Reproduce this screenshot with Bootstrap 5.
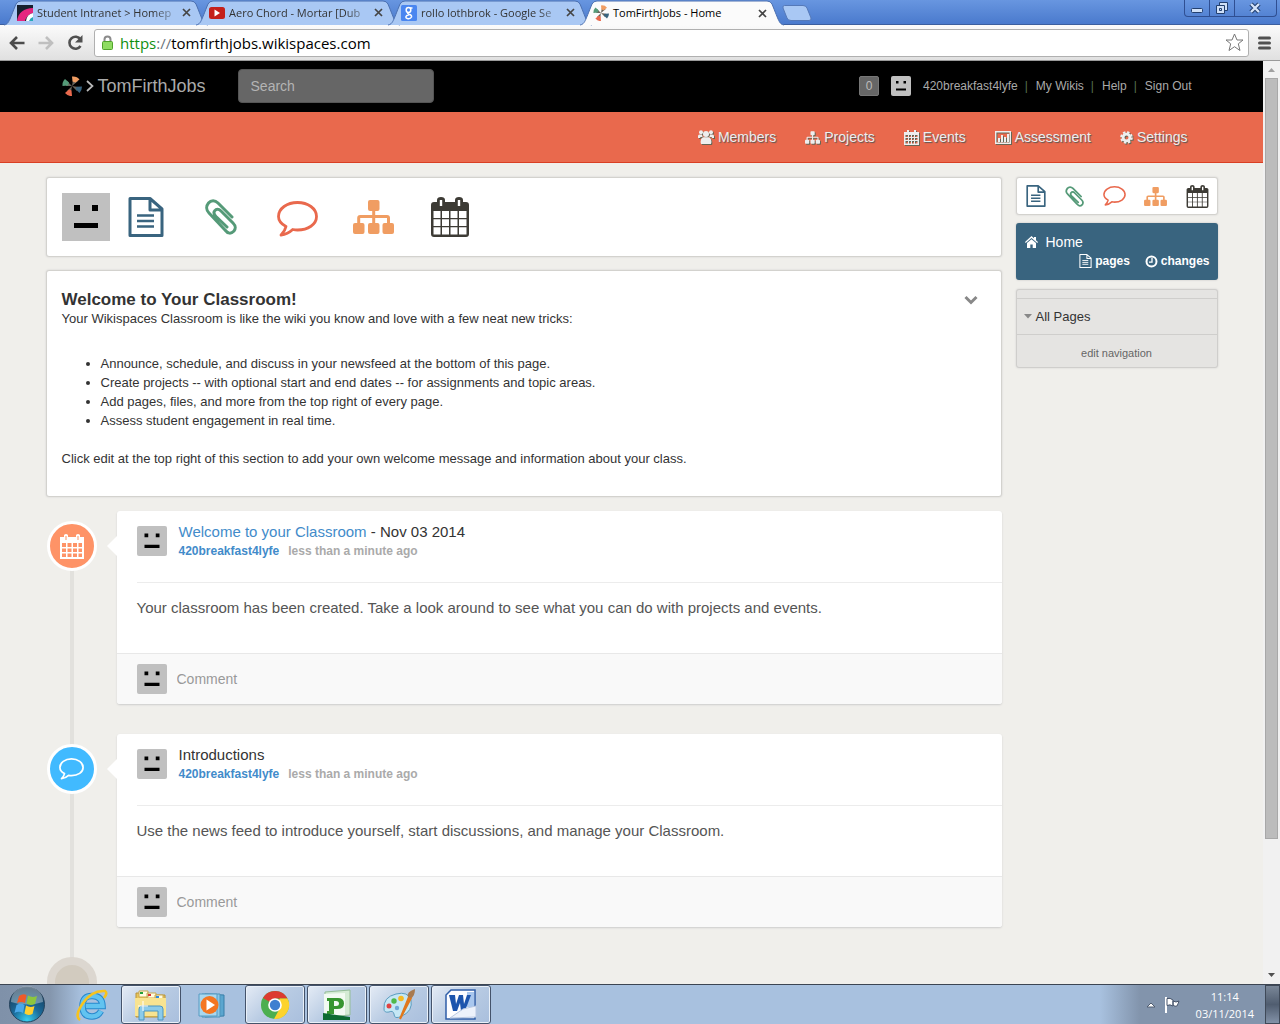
<!DOCTYPE html>
<html lang="en">
<head>
<meta charset="utf-8">
<meta name="viewport" content="width=device-width, initial-scale=1">
<title>TomFirthJobs - Home</title>
<link href="https://cdn.jsdelivr.net/npm/bootstrap@5.3.0/dist/css/bootstrap.min.css" rel="stylesheet">
<style>
body{font-family:"Liberation Sans",Arial,sans-serif;font-size:14px;line-height:20px;color:#333;background:#f0efeb}
a{text-decoration:none}
svg{display:block;flex:none}
button{border:0;background:none;padding:0;color:inherit}
.ui-font{font-family:"Open Sans","Noto Sans",sans-serif}
/* browser window */
.tabstrip{height:25px;background:linear-gradient(#6896e0,#4a7acd);border-bottom:1px solid #3c5f9f;padding-left:4px}
.tab{width:204px;margin-right:-12px;height:25px;padding-left:13px;font-size:11px;line-height:24px;color:#333}
.tab-shape{position:absolute;left:0;top:0;width:100%;height:26px}
.tab-title{width:137px;white-space:nowrap;margin-left:4px}
.faded{-webkit-mask-image:linear-gradient(90deg,#000 85%,#0004);mask-image:linear-gradient(90deg,#000 85%,#0004)}
.tab.active{z-index:3;height:26px;color:#000}
.tab>*{position:relative}
.tab>.tab-shape{position:absolute}
.win-buttons{width:93px;height:17px;border:1px solid #2f4f92;border-top:0;border-radius:0 0 4px 4px;margin-right:3px}
.win-buttons button+button{border-left:1px solid #2f4f92}
.toolbar{height:36px;background:linear-gradient(#fbfbfb,#e0e0e0);border-bottom:1px solid #9a9a9a;padding:0 9px}
.omnibox{height:28px;background:#fff;border:1px solid #b0b0b0;border-radius:3px;margin:0 9px 0 11px;padding:0 4px 0 6px;font-size:15px;line-height:26px;color:#000;gap:6px}
.scheme{color:#0f8f0f}
.scroller{width:17px;background:#f1f1f1;padding:0 2px}
.thumb{flex:0 0 82.5%;background:#bcbcbc;border:1px solid #a8a8a8}
/* site header */
.topbar{height:51px;background:#000;color:#aaa;padding-bottom:1px}
.site-width{width:100%;max-width:1172px;margin:0 auto}
.brand{font-size:18px;color:#aaa;gap:4px;margin-right:32px}
.search{width:196px;height:34px;background:#666;border:1px solid #555;border-radius:4px;color:#ccc;padding:0 12px;font-size:14px}
.search::placeholder{color:#b4b4b4;opacity:1}
.user-links{font-size:12px;padding-right:26px}
.user-links a{color:#aaa}
.count{width:20px;height:20px;background:#666;border:1px solid #777;border-radius:2px;text-align:center;line-height:18px;color:#bbb}
.divider{color:#56704f;margin:0 8px 0 7px}
.mainnav{height:51px;background:#e9694d;border-bottom:1px solid #d93f23}
.mainnav a{color:#eee;text-shadow:1px 1px 1px #555;gap:4px}
.mainnav svg{filter:drop-shadow(1px 1px 0 #665)}
.mainnav .site-width{gap:29px;padding-right:30px}
/* page body */
.layout{gap:14px;padding-top:14px}
.sidebar{width:202px}
.panel{background:#fff;border:1px solid #d3d2ce;border-radius:3px;box-shadow:0 0 2px #ccc}
.create-bar{height:80px;padding:0 15px}
.create-cell{width:76px;padding-right:4px}
.welcome{margin-top:13px;padding:19px 15px 29px;font-size:13px;line-height:19px;height:227px}
.welcome h1{font-size:17px;line-height:19px;font-weight:700;margin:0}
.welcome ul{margin:26px 0 19px;padding-left:39px}
.welcome p{margin:0}
.feed{margin-top:14px;padding-left:1px}
.feed::before{content:"";position:absolute;left:24px;top:35px;bottom:0;width:4px;background:#e2e1dd}
.entry{gap:20px;margin-bottom:30px}
.node{width:50px;height:50px;border:3px solid #fff;border-radius:50%;color:#fff;margin-top:10px;flex:none}
.node.event{background:#fe9367}
.node.talk{background:#41baff}
.node.last{background:#d2cbbf;border:8px solid #dcd7d0;margin:0}
.post{background:#fff;border-radius:3px;box-shadow:0 1px 2px #ccc}
.post::before{content:"";position:absolute;left:-10px;top:25px;border:10px solid transparent;border-left:0;border-right-color:#fff}
.post-head{margin-left:20px;padding-top:11px;height:72px;border-bottom:1px solid #ececec;gap:12px}
.post-title{font-size:15px;line-height:20px}
.post-meta{font-size:12px;line-height:19px;font-weight:700;color:#aaa;gap:9px}
.post a,.post-title a{color:#428bca}
.post-text{height:70px;padding:15px 20px;font-size:15px;color:#555}
.post-foot{height:51px;background:#f9f9f9;border-top:1px solid #e8e8e8;border-radius:0 0 3px 3px;padding:0 20px;gap:10px}
.post-foot input{border:0;background:none;padding:0;font-size:14px;outline:0}
.post-foot input::placeholder{color:#999;opacity:1}
.face{border-radius:2px}
.side-create{height:38px;padding:0 8px}
.home-box{margin-top:8px;height:57px;background:#39647f;border-radius:3px;color:#fff;padding:9px 8px 0 9px;box-shadow:0 0 2px #bbb}
.home-box a{color:#fff}
.home-sub{font-size:12px;font-weight:700;gap:15px;line-height:18px}
.home-sub a{gap:3px}
.side-nav{margin-top:9px;background:#e5e4e2;border:1px solid #cfcecc;border-radius:3px;padding-top:8px;box-shadow:0 0 2px #ccc}
.side-nav>*{border-top:1px solid #cfcecc}
.all-pages{height:36px;padding-left:7px;gap:4px;font-size:13px;color:#333}
.edit-nav{height:33px;padding-top:4px;font-size:11px;color:#666}
.c-blue{color:#39647f}.c-green{color:#559a78}.c-red{color:#e9694d}.c-orange{color:#f09d62}.c-dark{color:#3d3b35}
/* taskbar */
.taskbar{height:40px;border-top:1px solid #3c4552;background:linear-gradient(90deg,#7f91a9 0,#8496ad 50px,#a8c1df 82px,#a8c1df calc(100% - 180px),#8294ac calc(100% - 140px),#8294ac);padding-left:7px;gap:2px}
.task{width:60px;height:39px}
.task-wide{width:54px}
.task.open{background:linear-gradient(135deg,#e4ebf5,#b8cbe3 50%,#a9bfdd);border:1px solid #44536b;border-radius:3px;box-shadow:inset 0 0 0 1px #e9f0f8}
.clock{font-size:11px;line-height:17px;color:#fff;text-align:center;margin:0 11px 0 16px}
.show-desktop{width:15px;height:39px;background:linear-gradient(#7a8798,#505d70 50%,#8392a8);border:1px solid #3f4958}
</style>
<script src="https://cdn.jsdelivr.net/npm/bootstrap@5.3.0/dist/js/bootstrap.bundle.min.js"></script>
</head>
<body class="vh-100 d-flex flex-column overflow-hidden">
<svg width="0" height="0" class="position-absolute" aria-hidden="true">
<symbol id="i-file" viewBox="0 0 36 40"><path d="M2 1.5H22L34 12V38.5H2ZM22 2V13H34" fill="none" stroke="currentColor" stroke-width="3" stroke-linejoin="round"/><path d="M9 18.5H26M9 24H26M9 29.500H26" stroke="currentColor" stroke-width="2.600"/></symbol>
<symbol id="i-clip" viewBox="0 0 33 36"><path d="M27 18L13 4C10 1 6 1 3.500 4C1 7 1 11 4 14L20 31C23 35 26 35 29 32C31 29 31 27 28 24L16 12C13.500 9.500 11 10 10 11.500C8 13.500 9 15.500 11 17.500L22 28" fill="none" stroke="currentColor" stroke-width="3" stroke-linecap="round"/></symbol>
<symbol id="i-talk" viewBox="0 0 41 36"><path d="M20.500 1.500C31 1.500 39.500 7.500 39.500 15.500S31 29 20.500 29C18.800 29 17.200 28.800 15.700 28.500C12.500 31.500 8.500 33.500 4 34C6.500 31.500 8.300 29 9 25.500C4.200 23 1.500 19.500 1.500 15.500C1.500 7.500 10 1.500 20.500 1.500Z" fill="none" stroke="currentColor" stroke-width="2.800" stroke-linejoin="round"/></symbol>
<symbol id="i-tree" viewBox="0 0 41 34"><g fill="currentColor"><rect x="15" width="11.500" height="11" rx="2"/><rect y="23" width="11.500" height="11" rx="2"/><rect x="15" y="23" width="11.500" height="11" rx="2"/><rect x="29.500" y="23" width="11.500" height="11" rx="2"/></g><path d="M20.700 10V24M5.700 24V18Q5.700 16.500 7.200 16.500H34Q35.500 16.500 35.500 18V24" fill="none" stroke="currentColor" stroke-width="3"/></symbol>
<symbol id="i-cal" viewBox="0 0 38 40"><path fill="currentColor" fill-rule="evenodd" d="M3 5H6V3Q6 0 10 0T14 3V5H24V3Q24 0 28 0T32 3V5H35Q38 5 38 8V37Q38 40 35 40H3Q0 40 0 37V8Q0 5 3 5ZM8.800 3V9H11.200V3ZM26.800 3V9H29.200V3ZM2.500 14V21H9.500V14ZM11 14V21H18V14ZM19.500 14V21H26.500V14ZM28 14V21H35.500V14ZM2.500 22.200V29H9.500V22.200ZM11 22.200V29H18V22.200ZM19.500 22.200V29H26.500V22.200ZM28 22.200V29H35.500V22.200ZM2.500 30.200V37.500H9.500V30.200ZM11 30.200V37.500H18V30.200ZM19.500 30.200V37.500H26.500V30.200ZM28 30.200V37.500H35.500V30.200Z"/></symbol>
<symbol id="i-face" viewBox="0 0 24 24"><path fill="#c0c0c0" d="M0 0h24v24H0z"/><path d="M6 6h3v3H6zM15 6h3v3h-3zM6 15h12v2.500H6z"/></symbol>
<symbol id="i-pin" viewBox="0 0 20 20"><path fill="#6a655c" d="M10 10L11 4L16 5ZM10 10L16 11L15 15ZM10 10L9 16L5 15ZM10 10L4 10L5 5Z"/><path fill="#f09d62" d="M10 0.500Q15 0 17.500 3.500L13.500 6.500L10.500 5.500Z"/><path fill="#39647f" d="M20 10.500Q20 14.500 17.500 17L13.500 13L14.500 10.800Z"/><path fill="#e9694d" d="M10 20Q6 20.500 3 17L7 13.500L9.500 14.500Z"/><path fill="#559a78" d="M0.500 10Q0 6 3 3L7 6.500L6 9.500Z"/></symbol>
<symbol id="i-x" viewBox="0 0 9 9"><path d="M1 1L8 8M8 1L1 8" stroke="#444" stroke-width="1.700"/></symbol>
<symbol id="tab-back" viewBox="0 0 204 26"><path d="M0 25C5 24 5 21 12 4Q13.500 1 17 1H187Q190.500 1 192 4C199 21 199 24 204 25" stroke="#4a6fb0"/></symbol>
</svg>

<header class="ui-font flex-shrink-0">
<div class="tabstrip d-flex" role="tablist">
<div class="tab position-relative d-flex align-items-center" role="tab"><svg class="tab-shape" fill="#a9c8f4"><use href="#tab-back"/></svg><svg width="16" height="16" viewBox="0 0 16 16"><path fill="#16202e" d="M0 0h16v16H0z"/><path fill="#e5257f" d="M0 16C1 8 7 3 16 3V8C12 9 9 12 8 16Z"/><path d="M9 16Q10 9 16 8V16Z" fill="#fff"/><path d="M12 16Q13 13 16 12V16Z" fill="#26a9b8"/></svg><span class="tab-title faded">Student Intranet &gt; Homep</span><button aria-label="Close" class="ms-2"><svg width="9" height="9"><use href="#i-x"/></svg></button></div>
<div class="tab position-relative d-flex align-items-center" role="tab"><svg class="tab-shape" fill="#a9c8f4"><use href="#tab-back"/></svg><svg width="16" height="16" viewBox="0 0 16 16"><rect y="2" width="16" height="12" rx="2.500" fill="#c4201b"/><path d="M5.500 4.500L11 8L5.500 11.500Z" fill="#fff"/></svg><span class="tab-title faded">Aero Chord - Mortar [Dub</span><button aria-label="Close" class="ms-2"><svg width="9" height="9"><use href="#i-x"/></svg></button></div>
<div class="tab position-relative d-flex align-items-center" role="tab"><svg class="tab-shape" fill="#a9c8f4"><use href="#tab-back"/></svg><svg width="16" height="16" viewBox="0 0 16 16"><rect width="16" height="16" rx="1.500" fill="#4a86f0"/><g fill="none" stroke="#fff" stroke-width="1.500"><ellipse cx="7.500" cy="5" rx="2.300" ry="2.500"/><path d="M9 3H11.500M7 7.500Q6 8.500 8 9.200Q11 10 10.500 12Q9.500 14 7 13.700Q4.500 13.300 5 11.500Q5.500 10 8 9.700"/></g></svg><span class="tab-title faded">rollo lothbrok - Google Se</span><button aria-label="Close" class="ms-2"><svg width="9" height="9"><use href="#i-x"/></svg></button></div>
<div class="tab active position-relative d-flex align-items-center" role="tab" aria-selected="true"><svg class="tab-shape" fill="#fbfbfb"><use href="#tab-back"/></svg><svg width="16" height="16"><use href="#i-pin"/></svg><span class="tab-title">TomFirthJobs - Home</span><button aria-label="Close" class="ms-2"><svg width="9" height="9"><use href="#i-x"/></svg></button></div>
<button aria-label="New tab" class="ms-2"><svg width="32" height="25"><path d="M4.500 5.500H23Q26 5.500 27 8L31 18Q31.500 20.500 29 20.500H11Q8 20.500 7 18L3 8Q2.500 5.500 4.500 5.500Z" fill="#a9c8f4" stroke="#5579b8"/></svg></button>
<div class="win-buttons d-flex ms-auto">
<button aria-label="Minimize" class="px-0"><svg width="24" height="16"><rect x="6.500" y="8.500" width="11" height="4" rx="1" fill="#cfe0f8" stroke="#23406f"/></svg></button>
<button aria-label="Restore"><svg width="24" height="16"><path d="M9.500 2.500H17.500V10.500H9.500Z" fill="#cfe0f8" stroke="#23406f"/><path d="M6.500 5.500H14.500V13.500H6.500ZM9.500 8.500V10.500H11.500V8.500Z" fill-rule="evenodd" fill="#cfe0f8" stroke="#23406f"/></svg></button>
<button aria-label="Close window" class="flex-grow-1"><svg width="40" height="16"><path d="M16 4L24 12M24 4L16 12" stroke="#23406f" stroke-width="4.500"/><path d="M16 4L24 12M24 4L16 12" stroke="#d5e4fa" stroke-width="2.400"/></svg></button>
</div>
</div>
<div class="toolbar d-flex align-items-center">
<button aria-label="Back"><svg width="16" height="14"><path d="M15.500 7H2M8 1L2 7L8 13" fill="none" stroke="#4b4b4b" stroke-width="2.600"/></svg></button>
<button aria-label="Forward" class="mx-3"><svg width="10" height="14" overflow="visible"><path d="M-2.500 7H11M5 1L11 7L5 13" fill="none" stroke="#bfbfbf" stroke-width="2.600"/></svg></button>
<button aria-label="Reload"><svg width="16" height="16"><path d="M13.500 4.500A6 6 0 1 0 13.500 11" fill="none" stroke="#505050" stroke-width="2.600"/><path d="M15.500 0V7.500H8Z" fill="#505050"/></svg></button>
<div class="omnibox flex-grow-1 d-flex align-items-center" role="textbox" aria-label="Address"><svg width="13" height="16"><path d="M3.500 8V4.500A3 3 0 0 1 9.500 4.500V8" fill="none" stroke="#8b8b8b" stroke-width="2"/><rect x="1.500" y="6.500" width="10" height="8" rx="1" fill="#8fdc62" stroke="#51a32c"/></svg><span class="flex-grow-1"><span class="scheme">https</span><span class="text-secondary">://</span>tomfirthjobs.wikispaces.com</span><svg width="19" height="19" viewBox="0 0 19 19"><path d="M9.500 1L12 7H18L13.300 10.800L15 17.500L9.500 13.700L4 17.500L5.700 10.800L1 7H7Z" fill="#fff" stroke="#777" stroke-linejoin="round"/></svg></div>
<button aria-label="Menu"><svg width="13" height="14"><path d="M1.500 2H11.500M1.500 7H11.500M1.500 12H11.500" stroke="#505050" stroke-width="3" stroke-linecap="round"/></svg></button>
</div>
</header>

<div class="d-flex flex-grow-1 overflow-hidden">
<div class="flex-grow-1 overflow-hidden">
<div class="topbar d-flex">
<div class="site-width d-flex align-items-center">
<a href="#" class="brand d-flex align-items-center ms-3"><svg width="20" height="20"><use href="#i-pin"/></svg><svg width="8" height="12"><path d="M1 1L6.500 6L1 11" fill="none" stroke="#bbb" stroke-width="1.700"/></svg><span>TomFirthJobs</span></a>
<input class="search" type="text" placeholder="Search" aria-label="Search">
<div class="user-links d-flex align-items-center flex-grow-1 justify-content-end"><span class="count me-2">0</span><svg width="20" height="20" class="face ms-1 me-2"><use href="#i-face"/></svg><a href="#" class="ms-1">420breakfast4lyfe</a><span class="divider">|</span><a href="#">My Wikis</a><span class="divider">|</span><a href="#">Help</a><span class="divider">|</span><a href="#">Sign Out</a></div>
</div>
</div>
<nav class="mainnav d-flex">
<div class="site-width d-flex align-items-center justify-content-end">
<a href="#" class="d-flex align-items-center"><svg width="16" height="14" viewBox="0 0 16 14" fill="currentColor"><circle cx="3" cy="2.300" r="2"/><circle cx="13" cy="2.300" r="2"/><circle cx="8" cy="4" r="3"/><path d="M0 8V6Q0 4.500 1.500 4.500H4Q4 6.500 5 7H2.500L2 8ZM16 8V6Q16 4.500 14.500 4.500H12Q12 6.500 11 7H13.500L14 8ZM3 14Q2 13 3 9.500Q4 7.300 5.500 7.300H10.500Q12 7.300 13 9.500Q14 13 13 14Z"/></svg>Members</a>
<a href="#" class="d-flex align-items-center"><svg width="15" height="13"><use href="#i-tree"/></svg>Projects</a>
<a href="#" class="d-flex align-items-center"><svg width="15" height="15" viewBox="0 0 15 15" fill="currentColor"><path fill-rule="evenodd" d="M0 2H3V0H5V2H10V0H12V2H15V15H0ZM1.500 5V7H4V5ZM5 5V7H7V5ZM8 5V7H10V5ZM11 5V7H13.500V5ZM1.500 8V10H4V8ZM5 8V10H7V8ZM8 8V10H10V8ZM11 8V10H13.500V8ZM1.500 11V13.500H4V11ZM5 11V13.500H7V11ZM8 11V13.500H10V11ZM11 11V13.500H13.500V11Z"/></svg>Events</a>
<a href="#" class="d-flex align-items-center"><svg width="16" height="13"><path d="M.7 .7H15.300V12.300H.7Z" fill="none" stroke="currentColor" stroke-width="1.400"/><path d="M4 11V7M7 11V4M10 11V6M13 11V3" stroke="currentColor" stroke-width="2"/></svg>Assessment</a>
<a href="#" class="d-flex align-items-center"><svg width="13" height="13" viewBox="-6.500 -6.500 13 13"><circle r="3.400" fill="none" stroke="currentColor" stroke-width="2.800"/><circle r="5.300" fill="none" stroke="currentColor" stroke-width="2" stroke-dasharray="2.400 1.760"/></svg>Settings</a>
</div>
</nav>
<div class="site-width layout d-flex align-items-start">
<main class="flex-grow-1">
<div class="panel create-bar d-flex align-items-center">
<svg width="48" height="48"><use href="#i-face"/></svg>
<a href="#" class="create-cell d-flex justify-content-center c-blue" aria-label="Page"><svg width="36" height="40"><use href="#i-file"/></svg></a>
<a href="#" class="create-cell d-flex justify-content-center c-green" aria-label="File"><svg width="33" height="36"><use href="#i-clip"/></svg></a>
<a href="#" class="create-cell d-flex justify-content-center align-items-center pt-1 c-red" aria-label="Discussion"><svg width="41" height="36"><use href="#i-talk"/></svg></a>
<a href="#" class="create-cell d-flex justify-content-center c-orange" aria-label="Project"><svg width="41" height="34"><use href="#i-tree"/></svg></a>
<a href="#" class="create-cell d-flex justify-content-center c-dark" aria-label="Event"><svg width="38" height="40"><use href="#i-cal"/></svg></a>
</div>
<section class="panel welcome">
<div class="d-flex justify-content-between"><h1>Welcome to Your Classroom!</h1><button aria-label="Collapse" class="me-2"><svg width="14" height="10"><path d="M1.500 2L7 7.500L12.500 2" fill="none" stroke="#888" stroke-width="3"/></svg></button></div>
<p>Your Wikispaces Classroom is like the wiki you know and love with a few neat new tricks:</p>
<ul><li>Announce, schedule, and discuss in your newsfeed at the bottom of this page.</li><li>Create projects -- with optional start and end dates -- for assignments and topic areas.</li><li>Add pages, files, and more from the top right of every page.</li><li>Assess student engagement in real time.</li></ul>
<p>Click edit at the top right of this section to add your own welcome message and information about your class.</p>
</section>
<section class="feed position-relative">
<div class="entry d-flex position-relative">
<div class="node event d-flex align-items-center justify-content-center"><svg width="24" height="25" viewBox="0 0 24 25"><path fill="currentColor" fill-rule="evenodd" d="M0 3H4V1Q6 -1 8 1V3H16V1Q18 -1 20 1V3H24V25H0ZM5.500 2V6H6.500V2ZM17.500 2V6H18.500V2ZM2 9V13H6V9ZM7.500 9V13H11.500V9ZM13 9V13H17V9ZM18.500 9V13H22V9ZM2 14.500V18H6V14.500ZM7.500 14.500V18H11.500V14.500ZM13 14.500V18H17V14.500ZM18.500 14.500V18H22V14.500ZM2 19.500V23H6V19.500ZM7.500 19.500V23H11.500V19.500ZM13 19.500V23H17V19.500ZM18.500 19.500V23H22V19.500Z"/></svg></div>
<article class="post flex-grow-1 position-relative">
<div class="post-head d-flex"><svg width="30" height="30" class="face mt-1"><use href="#i-face"/></svg><div><div class="post-title"><a href="#">Welcome to your Classroom</a> - Nov 03 2014</div><div class="post-meta d-flex"><a href="#">420breakfast4lyfe</a><span>less than a minute ago</span></div></div></div>
<div class="post-text">Your classroom has been created. Take a look around to see what you can do with projects and events.</div>
<div class="post-foot d-flex align-items-center"><svg width="30" height="30" class="face"><use href="#i-face"/></svg><input class="flex-grow-1" type="text" placeholder="Comment" aria-label="Comment"></div>
</article>
</div>
<div class="entry d-flex position-relative">
<div class="node talk d-flex align-items-center justify-content-center"><svg width="25" height="22"><use href="#i-talk"/></svg></div>
<article class="post flex-grow-1 position-relative">
<div class="post-head d-flex"><svg width="30" height="30" class="face mt-1"><use href="#i-face"/></svg><div><div class="post-title">Introductions</div><div class="post-meta d-flex"><a href="#">420breakfast4lyfe</a><span>less than a minute ago</span></div></div></div>
<div class="post-text">Use the news feed to introduce yourself, start discussions, and manage your Classroom.</div>
<div class="post-foot d-flex align-items-center"><svg width="30" height="30" class="face"><use href="#i-face"/></svg><input class="flex-grow-1" type="text" placeholder="Comment" aria-label="Comment"></div>
</article>
</div>
<div class="node last position-relative"></div>
</section>
</main>
<aside class="sidebar flex-shrink-0">
<div class="panel side-create d-flex align-items-center justify-content-between">
<a href="#" class="c-blue" aria-label="New page"><svg width="22" height="22"><use href="#i-file"/></svg></a>
<a href="#" class="c-green" aria-label="New file"><svg width="20" height="21"><use href="#i-clip"/></svg></a>
<a href="#" class="c-red" aria-label="New discussion"><svg width="23" height="20"><use href="#i-talk"/></svg></a>
<a href="#" class="c-orange" aria-label="New project"><svg width="23" height="19"><use href="#i-tree"/></svg></a>
<a href="#" class="c-dark" aria-label="New event"><svg width="23" height="23"><use href="#i-cal"/></svg></a>
</div>
<div class="home-box">
<a href="#" class="d-flex align-items-center"><svg width="13" height="12" class="me-2" fill="#fff"><path d="M6.500 0L9 2.300V1H11V4.200L13 6L12.300 7L6.500 2L.7 7L0 6ZM2 7L6.500 3.200L11 7V12H7.700V8.500H5.300V12H2Z"/></svg>Home</a>
<div class="home-sub d-flex justify-content-end"><a href="#" class="d-flex align-items-center"><svg width="13" height="14"><use href="#i-file"/></svg>pages</a><a href="#" class="d-flex align-items-center"><svg width="13" height="13"><circle cx="6.500" cy="6.500" r="5" fill="none" stroke="#fff" stroke-width="2"/><path d="M7 3V7.200H4" fill="none" stroke="#fff" stroke-width="1.300"/></svg>changes</a></div>
</div>
<div class="side-nav">
<a href="#" class="all-pages d-flex align-items-center"><svg width="8" height="5"><path d="M0 0H8L4 4.500Z" fill="#888"/></svg>All Pages</a>
<a href="#" class="edit-nav d-flex align-items-center justify-content-center">edit navigation</a>
</div>
</aside>
</div>
</div>
<div class="scroller d-flex flex-column align-items-stretch flex-shrink-0" aria-hidden="true"><svg width="13" height="17"><path d="M3 11H10L6.500 7Z" fill="#a0a0a0"/></svg><div class="thumb"></div><svg width="13" height="17" class="mt-auto"><path d="M3 6H10L6.500 10Z" fill="#505050"/></svg></div>
</div>

<footer class="taskbar ui-font d-flex align-items-center flex-shrink-0">
<button aria-label="Start" class="me-3"><svg width="40" height="39" viewBox="0 0 40 39"><defs><radialGradient id="orb" cy=".95" r=".9"><stop offset="0" stop-color="#37d0f0"/><stop offset=".45" stop-color="#1b6c9c"/><stop offset="1" stop-color="#173a58"/></radialGradient></defs><circle cx="20" cy="19.500" r="17.500" fill="url(#orb)" stroke="#26435c"/><path d="M4 17A16 16 0 0 1 36 17Q20 22 4 17Z" fill="#fff" opacity=".35"/><path d="M12 11Q16 8 19.500 10L18 18Q14 16 10 18Z" fill="#ef5a29"/><path d="M21 10.500Q25 13 30 11L28 19Q23 21 19.500 18.500Z" fill="#8cc63e"/><path d="M9.500 20Q14 17.500 17.600 20L16 28Q12 25.500 7.500 28Z" fill="#4aa8ea"/><path d="M19 20.500Q23 23 27.500 21L25.500 29Q21 31 17.500 28.500Z" fill="#ffd02f"/></svg></button>
<button class="task task-wide d-flex align-items-center justify-content-center" aria-label="Internet Explorer"><svg width="34" height="34" viewBox="0 0 34 34"><path d="M26 23Q23 28.500 17 28.500Q7.500 28.500 7.500 18T17.500 8Q27 8 27.500 18H11" fill="none" stroke="#2788cd" stroke-width="6.500"/><path d="M26 23Q23 28.500 17 28.500Q7.500 28.500 7.500 18T17.500 8Q27 8 27.500 18H11" fill="none" stroke="#62c3f0" stroke-width="4.500"/><path d="M5 32Q-1 28 8 15T30 3Q33 5 29 10" fill="none" stroke="#f7c31f" stroke-width="2.600"/></svg></button>
<button class="task open d-flex align-items-center justify-content-center" aria-label="Explorer"><svg width="34" height="32" viewBox="0 0 34 32"><path d="M2 4H10L12 6H31V28H2Z" fill="#e8c55a" stroke="#b8923a"/><path d="M5 2H14V8H5ZM13 4H22V9H13ZM21 6H29V10H21Z" fill="#fffbe0" stroke="#c8a850"/><path d="M6 3H9V5H6Z" fill="#21a038"/><path d="M14 5H17V7H14Z" fill="#d33"/><path d="M22 7H25V9H22Z" fill="#2e8be0"/><path d="M1 9H32V27H1Z" fill="#f8e391"/><path d="M5 31V20Q5 17 8 17H26Q29 17 29 20V31H24V22H10V31Z" fill="#8bcbea" stroke="#4a95c2"/><path d="M9 12V22M4 17H14" stroke="#fff"/></svg></button>
<button class="task d-flex align-items-center justify-content-center" aria-label="Media Player"><svg width="32" height="28" viewBox="0 0 32 28"><path d="M8 3L27 4V25L8 26Z" fill="#5ba6cf" stroke="#397fa8"/><path d="M5 3L23 3V26L5 26Z" fill="#8cc7e5" stroke="#4e94bb"/><path d="M2 3H20V25H2Z" fill="#a9d8ef" stroke="#579bc2"/><circle cx="12.500" cy="14" r="9" fill="#f47621"/><path d="M9.500 8.500L18 14L9.500 19.500Z" fill="#fff"/></svg></button>
<button class="task open d-flex align-items-center justify-content-center" aria-label="Chrome"><svg width="30" height="30" viewBox="0 0 30 30"><circle cx="15" cy="15" r="14" fill="#4caf50"/><path d="M15 15L3 8A14 14 0 0 1 27.500 8.500H15Z" fill="#dc3b30"/><path d="M15 15L20 8.500H27.500A14 14 0 0 1 14 29L20 18Z" fill="#fdd32c"/><circle cx="15" cy="15" r="6.800" fill="#fff"/><circle cx="15" cy="15" r="5.200" fill="#3e7fd0"/></svg></button>
<button class="task open d-flex align-items-center justify-content-center" aria-label="Publisher"><svg width="30" height="32" viewBox="0 0 30 32"><path d="M3 3L28 1V26L3 28Z" fill="#d4ebd4" stroke="#94bd97"/><path d="M2 5L23 4V26L2 27Z" fill="#f2faf2"/><path d="M5 9H16Q22 9 22 14.500T15 20H12V25H5V22H7V12H5ZM12 12V17H14Q17 17 17 14.500T14 12Z" fill="#36952f" fill-rule="evenodd"/><path d="M1 24L28 28V31H1Z" fill="#0c6b31"/></svg></button>
<button class="task open d-flex align-items-center justify-content-center" aria-label="Paint"><svg width="34" height="32" viewBox="0 0 34 32"><path d="M2 20Q1 8 14 5Q26 2 29 11Q31 22 20 27Q12 31 12 25Q11 21 7 23Q2 24 2 20Z" fill="#c5e7f5" stroke="#5b9cbf"/><circle cx="7" cy="17" r="2.500" fill="#e04343"/><circle cx="12" cy="12" r="2.700" fill="#4fb84a"/><circle cx="19" cy="9.500" r="2.800" fill="#f6ba25"/><circle cx="15" cy="19" r="2.200" fill="#6ea7d6"/><path d="M18 30L27 8L29 9Z" fill="#f08b2b" stroke="#e0781d" stroke-width="2"/><path d="M26 8Q24 3 33 0Q33 7 29 9Z" fill="#a87a50"/></svg></button>
<button class="task open d-flex align-items-center justify-content-center" aria-label="Word"><svg width="32" height="32" viewBox="0 0 32 32"><path d="M6 1H30V30H1V6Z" fill="#fdfdff" stroke="#2f5ea8" stroke-width="1.500"/><path d="M22 3H29V18H22Z" fill="#a9c7ee"/><path d="M4 6H10L11 15L14 6H18L19 15L22 6H26L20 22H16L15 14L12 22H8Z" fill="#1c54ad"/><path d="M5 29L18 20L31 17V28Z" fill="#edf2fb" stroke="#b8c8e2"/></svg></button>
<div class="ms-auto d-flex align-items-center">
<button aria-label="Show hidden icons"><svg width="10" height="6"><path d="M1 5H9L5 1Z" fill="#fff" stroke="#505d70"/></svg></button>
<button aria-label="Action Center" class="ms-2"><svg width="16" height="16"><path d="M2 0V16" stroke="#fff" stroke-width="2"/><path d="M3 1.500Q6 .5 9 3V9Q6 7 3 8.500ZM9 4Q12 6 15 4Q14 7 13 9Q11 10 9 8Z" fill="#fff" stroke="#45536a"/></svg></button>
<div class="clock">11:14<br>03/11/2014</div>
<button class="show-desktop" aria-label="Show desktop"></button>
</div>
</footer>
</body>
</html>
